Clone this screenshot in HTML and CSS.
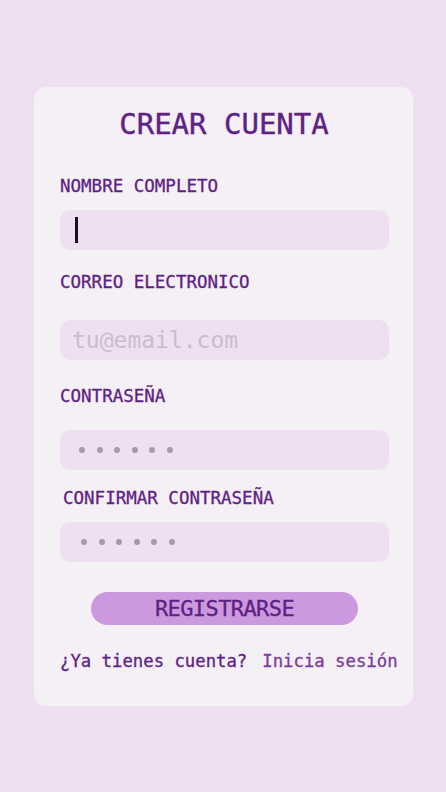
FILE: index.html
```html
<!DOCTYPE html>
<html lang="es">
<head>
<meta charset="utf-8">
<title>Crear cuenta</title>
<link rel="stylesheet" href="styles.css">
</head>
<body>
<main class="card">
  <h1 class="title">CREAR CUENTA</h1>
  <label class="label label-name">NOMBRE COMPLETO</label>
  <div class="field field-name"><span class="caret"></span></div>
  <label class="label label-email">CORREO ELECTRONICO</label>
  <input class="field field-email" type="text" placeholder="tu@email.com">
  <label class="label label-pass">CONTRASEÑA</label>
  <div class="field field-pass"><span class="dots dots-1"><i></i><i></i><i></i><i></i><i></i><i></i></span></div>
  <label class="label label-confirm">CONFIRMAR CONTRASEÑA</label>
  <div class="field field-confirm"><span class="dots dots-2"><i></i><i></i><i></i><i></i><i></i><i></i></span></div>
  <button class="btn" type="button">REGISTRARSE</button>
  <p class="footer"><span class="ask">¿Ya tienes cuenta?</span><a class="link" href="#">Inicia sesión</a></p>
</main>
</body>
</html>
```
FILE: styles.css
```css
* { box-sizing: border-box; }
html, body { margin: 0; padding: 0; }
body {
  background: #efe0f1;
  font-family: "DejaVu Sans Mono", monospace;
  color: #5d2284;
  width: 446px;
  height: 792px;
  overflow: hidden;
}
.card {
  margin: 87px 0 0 34px;
  width: 379px;
  height: 619px;
  background: #f5eff6;
  border-radius: 12px;
  padding: 23px 24px 0 26px;
  display: flex;
  flex-direction: column;
}
.title {
  margin: 0;
  font-size: 29px;
  line-height: 29px;
  font-weight: normal;
  text-align: center;
  color: #5d2284;
  padding-right: 1px;
  -webkit-text-stroke: 0.4px #5d2284;
}
.label {
  display: block;
  font-size: 17.5px;
  line-height: 17.5px;
  color: #5d2284;
  -webkit-text-stroke: 0.3px #5d2284;
}
.label-name { margin-top: 39px; }
.label-email { margin-top: 24px; }
.label-pass { margin-top: 28px; }
.label-confirm { margin-top: 20px; margin-left: 3px; }
.field {
  width: 329px;
  height: 40px;
  border: 0;
  border-radius: 10px;
  background: #efe0f1;
  display: flex;
  align-items: center;
  font-family: "DejaVu Sans Mono", monospace;
  outline: none;
}
.field-name { margin-top: 14px; padding-left: 15px; }
.field-email {
  margin-top: 29px;
  padding: 0 0 0 12px;
  font-size: 23px;
  color: #5d2284;
}
.field-email::placeholder { color: #cbbccd; }
.field-pass { margin-top: 24.5px; }
.field-confirm { margin-top: 14.5px; }
.caret {
  width: 3px;
  height: 26px;
  background: #1a1020;
}
.dots { display: flex; gap: 11.5px; }
.dots-1 { margin-left: 19px; }
.dots-2 { margin-left: 21px; }
.dots i {
  display: block;
  width: 6px;
  height: 6px;
  border-radius: 50%;
  background: #a39ba6;
}
.btn {
  align-self: center;
  margin-top: 30px;
  width: 267px;
  height: 33px;
  border: 0;
  border-radius: 17px;
  background: #cc99df;
  color: #5d2284;
  font-family: "DejaVu Sans Mono", monospace;
  font-size: 22px;
  letter-spacing: -0.6px;
  line-height: 33px;
  padding: 0;
  -webkit-text-stroke: 0.3px #5d2284;
}
.footer {
  margin: 28px 0 0 0;
  font-size: 17.3px;
  line-height: 17.5px;
  white-space: nowrap;
  color: #5d2284;
  -webkit-text-stroke: 0.3px #5d2284;
}
.link {
  margin-left: 15px;
  color: #7c3c9c;
  text-decoration: none;
  -webkit-text-stroke: 0.3px #7c3c9c;
}
```
